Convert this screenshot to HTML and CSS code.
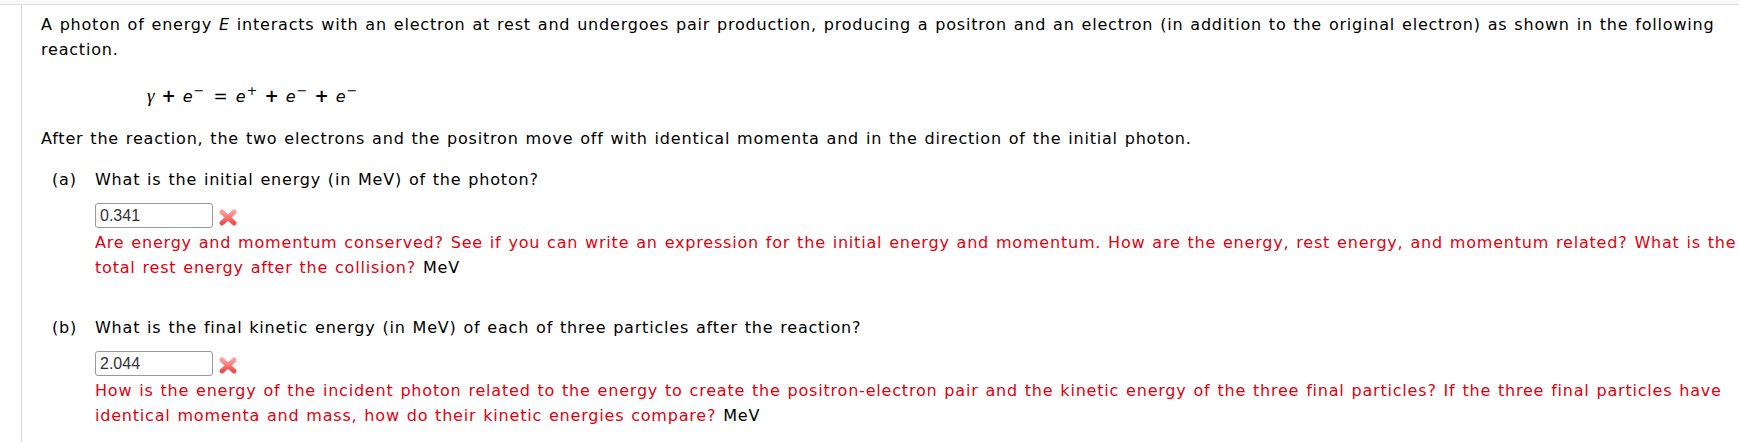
FILE: index.html
```html
<!DOCTYPE html>
<html>
<head>
<meta charset="utf-8">
<link rel="stylesheet" href="styles.css">
</head>
<body>
<div class="frame">
  <div class="panel">
    <p class="intro">A photon of energy <i>E</i> interacts with an electron at rest and undergoes pair production, producing a positron and an electron (in addition to the original electron) as shown in the following<br>reaction.</p>
    <div class="equation"><span class="gamma">γ</span><span class="op">+</span><span class="var">e</span><sup>−</sup><span class="op eq">=</span><span class="var">e</span><sup>+</sup><span class="op">+</span><span class="var">e</span><sup>−</sup><span class="op">+</span><span class="var">e</span><sup>−</sup></div>
    <p class="after">After the reaction, the two electrons and the positron move off with identical momenta and in the direction of the initial photon.</p>

    <div class="part">
      <div class="label">(a)</div>
      <div class="body">
        <div class="question">What is the initial energy (in MeV) of the photon?</div>
        <div class="answer">
          <span class="input">0.341</span>
          <svg class="wrong" width="20" height="19" viewBox="0 0 20 19">
            <defs>
              <linearGradient id="g1" x1="0" y1="0" x2="0" y2="1">
                <stop offset="0" stop-color="#ff9c9c"/>
                <stop offset="1" stop-color="#ef4d4d"/>
              </linearGradient>
            </defs>
            <path d="M4 4 L16 15 M16 4 L4 15" stroke="url(#g1)" stroke-width="5" stroke-linecap="round"/>
          </svg>
        </div>
        <div class="feedback">Are energy and momentum conserved? See if you can write an expression for the initial energy and momentum. How are the energy, rest energy, and momentum related? What is the<br>total rest energy after the collision? <span class="unit">MeV</span></div>
      </div>
    </div>

    <div class="part part-b">
      <div class="label">(b)</div>
      <div class="body">
        <div class="question">What is the final kinetic energy (in MeV) of each of three particles after the reaction?</div>
        <div class="answer">
          <span class="input">2.044</span>
          <svg class="wrong" width="20" height="19" viewBox="0 0 20 19">
            <defs>
              <linearGradient id="g2" x1="0" y1="0" x2="0" y2="1">
                <stop offset="0" stop-color="#ff9c9c"/>
                <stop offset="1" stop-color="#ef4d4d"/>
              </linearGradient>
            </defs>
            <path d="M4 4 L16 15 M16 4 L4 15" stroke="url(#g2)" stroke-width="5" stroke-linecap="round"/>
          </svg>
        </div>
        <div class="feedback">How is the energy of the incident photon related to the energy to create the positron-electron pair and the kinetic energy of the three final particles? If the three final particles have<br>identical momenta and mass, how do their kinetic energies compare? <span class="unit">MeV</span></div>
      </div>
    </div>
  </div>
</div>
</body>
</html>
```

FILE: styles.css
```css
html, body {
  margin: 0;
  padding: 0;
  overflow: hidden;
}

body {
  font-family: "DejaVu Sans", Verdana, sans-serif;
  font-size: 16px;
  letter-spacing: 0.8px;
  word-spacing: 1px;
  color: #000;
  width: 1739px;
  height: 442px;
  background: #fafafa;
}

.frame {
  margin-top: 4px;
  border-top: 1px solid #e2e2e2;
  background: #fff;
  height: 437px;
  padding-left: 21px;
}

.panel {
  border-left: 1px solid #d4d4d4;
  height: 100%;
  padding: 7px 0 0 19px;
  white-space: nowrap;
  line-height: 25px;
}

.intro, .after {
  margin: 0;
}

.equation {
  display: flex;
  align-items: baseline;
  margin: 21px 0 0 106px;
  line-height: 25px;
  letter-spacing: 0;
}

.gamma {
  font-family: "Liberation Serif", serif;
  font-style: italic;
  font-size: 19px;
}

.var {
  font-style: italic;
  font-size: 16px;
}

.op {
  font-weight: bold;
  font-size: 17px;
  margin: 0 7px;
}

.op.eq {
  margin: 0 8px 0 9px;
  font-weight: normal;
}

.equation sup {
  font-size: 13px;
  line-height: 0;
  position: relative;
  top: -7px;
  vertical-align: baseline;
  margin-left: 1px;
}

.after {
  margin-top: 17px;
}

.part {
  display: flex;
  margin-top: 16px;
}

.part-b {
  margin-top: 35px;
}

.label {
  width: 43px;
  margin-left: 11px;
  flex: none;
}

.answer {
  display: flex;
  align-items: center;
  height: 26px;
  margin-top: 10px;
  gap: 5px;
}

.input {
  box-sizing: border-box;
  width: 118px;
  height: 25px;
  border: 1px solid #9a9a9a;
  border-radius: 3px;
  font-family: "Liberation Sans", Arial, sans-serif;
  font-size: 16px;
  letter-spacing: 0;
  word-spacing: 0;
  color: #333;
  line-height: 23px;
  padding-left: 4px;
}

.wrong {
  display: block;
  margin-top: 4px;
}

.feedback {
  color: #e0000f;
  margin-top: 2px;
}

.unit {
  color: #000;
}
```
